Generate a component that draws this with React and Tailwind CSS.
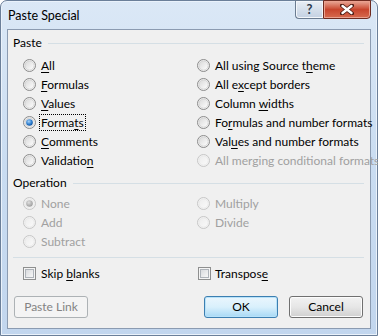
import React from "react";

const font = { fontFamily: 'Lato, "Liberation Sans", sans-serif' };

let gid = 0;
function Radio({ checked = false, disabled = false }) {
  const id = "r" + gid++;
  return (
    <svg width="13" height="13" viewBox="0 0 13 13" className="shrink-0">
      <defs>
        <linearGradient id={"g" + id} x1="0" y1="0" x2="1" y2="1">
          <stop offset="0" stopColor={disabled ? "#ececec" : "#d8d8d8"} />
          <stop offset="1" stopColor={disabled ? "#fafafa" : "#ffffff"} />
        </linearGradient>
        <radialGradient id={"d" + id} cx="0.4" cy="0.35" r="0.7">
          <stop offset="0" stopColor={disabled ? "#e0e0e0" : "#a9d3f8"} />
          <stop offset="0.6" stopColor={disabled ? "#b4b4b4" : "#2f7fcf"} />
          <stop offset="1" stopColor={disabled ? "#9a9a9a" : "#0c4a94"} />
        </radialGradient>
      </defs>
      <circle cx="6.5" cy="6.5" r="6" fill="#f4f4f4" stroke={disabled ? "#c6c6c6" : "#8a8a8a"} strokeWidth="1" />
      <circle cx="6.5" cy="6.5" r="4.6" fill={`url(#g${id})`} stroke={disabled ? "#e2e2e2" : "#c4c4c4"} strokeWidth="0.6" />
      {checked && <circle cx="6.5" cy="6.5" r="3.3" fill={`url(#d${id})`} />}
    </svg>
  );
}

function Checkbox() {
  return (
    <span className="shrink-0 w-[13px] h-[13px] border border-[#8e8f8f] bg-[#f4f4f4] p-[1px] flex">
      <span className="flex-1 border border-[#aeb3b9] bg-gradient-to-br from-[#d9dbde] to-[#f7f7f7]" />
    </span>
  );
}

function L({ t, u }) {
  if (u === undefined || u < 0) return <span className="whitespace-nowrap">{t}</span>;
  return (
    <span className="whitespace-nowrap">
      {t.slice(0, u)}
      <span className="underline underline-offset-2 decoration-1">{t[u]}</span>
      {t.slice(u + 1)}
    </span>
  );
}

function RadioRow({ label, u, checked, disabled, focus }) {
  return (
    <div className={"h-[19px] flex items-center gap-[5px] whitespace-nowrap " + (disabled ? "text-[#a0a0a0]" : "text-black")}>
      <Radio checked={checked} disabled={disabled} />
      {focus ? (
        <span className="border border-dotted border-black px-[1px] leading-[15px] -ml-[2px]">
          <L t={label} u={u} />
        </span>
      ) : (
        <L t={label} u={disabled ? undefined : u} />
      )}
    </div>
  );
}

function GroupHeader({ title }) {
  return (
    <div className="h-[14px] flex items-center pl-[5px] pr-[6px]">
      <span className="leading-[14px]">{title}</span>
      <div className="flex-1 h-px bg-[#d5dfe5] ml-[6px]" />
    </div>
  );
}

function Button({ children, primary, disabled }) {
  const cls = disabled
    ? "border-[#adb2b5] bg-[#f4f4f4] text-[#838383]"
    : primary
    ? "border-[#3c7fb1] bg-gradient-to-b from-[#eaf6fd] via-[#d9f0fc] to-[#a7d9f5] shadow-[inset_0_0_0_1px_#b8e2f9]"
    : "border-[#707070] bg-gradient-to-b from-[#f2f2f2] via-[#e6e6e6] to-[#d0d0d0] shadow-[inset_0_0_0_1px_#fcfcfc]";
  return (
    <div className={"w-[74px] h-[22px] border rounded-[3px] flex items-center justify-center shrink-0 " + cls}>
      {children}
    </div>
  );
}

export default function App() {
  return (
    <div className="w-[378px] h-[336px] bg-white text-[12px]" style={font}>
      <div className="w-[378px] h-[336px] rounded-t-[7px] border border-[#6b7f99] bg-gradient-to-b from-[#dbe8f6] via-[#c9dcf1] to-[#c2d6ee] flex flex-col shadow-[inset_0_0_0_1px_#eaf2fb]">
        {/* Title bar */}
        <div className="h-[28px] flex items-start shrink-0">
          <div className="pl-[7px] pt-[7px] text-[12.5px] text-black leading-[16px] flex-1">Paste Special</div>
          <div className="flex mr-[6px] -mt-px">
            <div className="w-[28px] h-[19px] border border-[#6b7c91] border-r-0 rounded-bl-[4px] bg-gradient-to-b from-[#e9eef5] via-[#d5dfeb] to-[#c4d1e2] flex items-center justify-center text-[#2c3a4d] font-bold text-[13px] leading-none shadow-[inset_0_0_0_1px_#f3f6fa]">
              ?
            </div>
            <div className="w-[48px] h-[19px] border border-[#6f2b20] rounded-br-[4px] bg-gradient-to-b from-[#e8a898] via-[#c8452d] to-[#d66a4f] flex items-center justify-center shadow-[inset_0_0_0_1px_#eaa18f]">
              <svg width="14" height="11" viewBox="0 0 14 11">
                <path d="M2 1.5 L12 9.5 M12 1.5 L2 9.5" stroke="#4a1a12" strokeWidth="4" strokeLinecap="round" />
                <path d="M2.5 2 L11.5 9 M11.5 2 L2.5 9" stroke="#ffffff" strokeWidth="2.4" strokeLinecap="round" />
              </svg>
            </div>
          </div>
        </div>
        {/* Client area */}
        <div className="mx-[6px] mb-[6px] flex-1 border border-[#8b9bb1] bg-[#f0f0f0] flex flex-col pt-[6px] text-black">
          <GroupHeader title="Paste" />
          <div className="flex mt-[6px] pl-[15px]">
            <div className="w-[174px] shrink-0 flex flex-col">
              <RadioRow label="All" u={0} />
              <RadioRow label="Formulas" u={0} />
              <RadioRow label="Values" u={0} />
              <RadioRow label="Formats" u={5} checked focus />
              <RadioRow label="Comments" u={0} />
              <RadioRow label="Validation" u={9} />
            </div>
            <div className="flex flex-col">
              <RadioRow label="All using Source theme" u={18} />
              <RadioRow label="All except borders" u={5} />
              <RadioRow label="Column widths" u={7} />
              <RadioRow label="Formulas and number formats" u={2} />
              <RadioRow label="Values and number formats" u={3} />
              <RadioRow label="All merging conditional formats" disabled />
            </div>
          </div>
          <div className="mt-[6px]">
            <GroupHeader title="Operation" />
          </div>
          <div className="flex mt-[4px] pl-[15px]">
            <div className="w-[174px] shrink-0 flex flex-col">
              <RadioRow label="None" checked disabled />
              <RadioRow label="Add" disabled />
              <RadioRow label="Subtract" disabled />
            </div>
            <div className="flex flex-col">
              <RadioRow label="Multiply" disabled />
              <RadioRow label="Divide" disabled />
            </div>
          </div>
          <div className="mt-[6px] ml-[5px] mr-[6px] h-px bg-[#d5dfe5]" />
          <div className="flex mt-[6px] pl-[15px]">
            <div className="w-[175px] shrink-0 h-[19px] flex items-center gap-[5px]">
              <Checkbox />
              <L t="Skip blanks" u={5} />
            </div>
            <div className="h-[19px] flex items-center gap-[4px]">
              <Checkbox />
              <L t="Transpose" u={8} />
            </div>
          </div>
          <div className="flex mt-[13px] pl-[6px] pr-[7px]">
            <Button disabled>Paste Link</Button>
            <div className="flex-1" />
            <Button primary>OK</Button>
            <div className="w-[11px]" />
            <Button>Cancel</Button>
          </div>
        </div>
      </div>
    </div>
  );
}
